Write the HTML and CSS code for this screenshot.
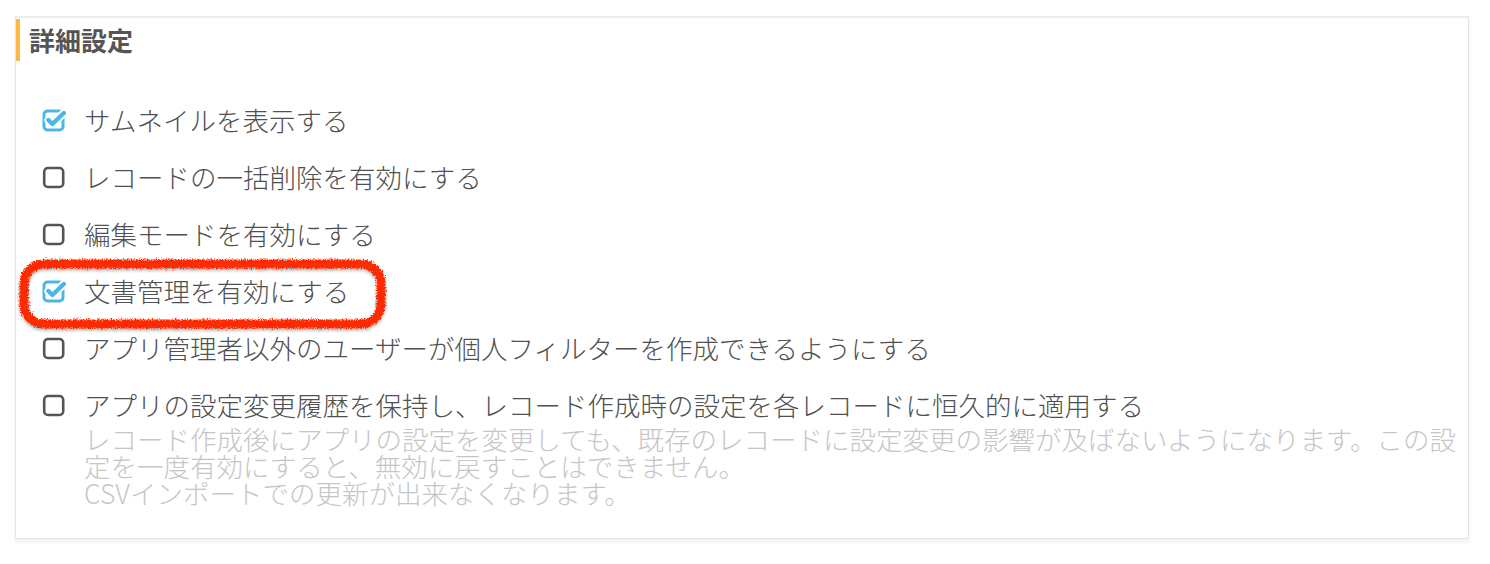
FILE: index.html
```html
<!DOCTYPE html>
<html lang="ja">
<head>
<meta charset="utf-8">
<title>詳細設定</title>
<link rel="stylesheet" href="styles.css">
</head>
<body>
<svg class="defs" width="0" height="0" aria-hidden="true">
  <defs>
    <filter id="rough" x="-10%" y="-30%" width="120%" height="160%">
      <feTurbulence type="fractalNoise" baseFrequency="0.8" numOctaves="2" seed="5" result="noise"/>
      <feDisplacementMap in="SourceGraphic" in2="noise" scale="6" xChannelSelector="R" yChannelSelector="G" result="disp"/>
      <feGaussianBlur in="disp" stdDeviation="0.35" result="soft"/>
      <feDropShadow in="soft" dx="0" dy="2" stdDeviation="1.6" flood-color="#000" flood-opacity="0.3"/>
    </filter>
    <symbol id="cb-on" viewBox="0 0 24 24">
      <rect x="2" y="3" width="19" height="19" rx="3.5" fill="none" stroke="#4bb7e8" stroke-width="3"/>
      <path d="M6.4 12 L10.4 16 L21.8 5" fill="none" stroke="#fff" stroke-width="8" stroke-linecap="round" stroke-linejoin="round"/>
      <path d="M6.4 12 L10.4 16 L21.8 5" fill="none" stroke="#4bb7e8" stroke-width="4.4" stroke-linecap="round" stroke-linejoin="round"/>
    </symbol>
    <symbol id="cb-off" viewBox="0 0 24 24">
      <rect x="2.2" y="3" width="19" height="19" rx="3.8" fill="none" stroke="#555" stroke-width="2.6"/>
    </symbol>
  </defs>
</svg>

<section class="card">
  <h2 class="title">詳細設定</h2>
  <ul class="options">
    <li class="option">
      <svg class="cb"><use href="#cb-on"/></svg>
      <span class="label">サムネイルを表示する</span>
    </li>
    <li class="option">
      <svg class="cb"><use href="#cb-off"/></svg>
      <span class="label">レコードの一括削除を有効にする</span>
    </li>
    <li class="option">
      <svg class="cb"><use href="#cb-off"/></svg>
      <span class="label">編集モードを有効にする</span>
    </li>
    <li class="option highlighted">
      <svg class="cb"><use href="#cb-on"/></svg>
      <span class="label">文書管理を有効にする</span>
      <svg class="mark" width="375" height="80" viewBox="0 0 375 80" aria-hidden="true">
        <rect x="9" y="9" width="357" height="60" rx="20" fill="none" stroke="#ff2a05" stroke-width="9" filter="url(#rough)"/>
      </svg>
    </li>
    <li class="option">
      <svg class="cb"><use href="#cb-off"/></svg>
      <span class="label">アプリ管理者以外のユーザーが個人フィルターを作成できるようにする</span>
    </li>
    <li class="option last">
      <svg class="cb"><use href="#cb-off"/></svg>
      <div class="body">
        <span class="label">アプリの設定変更履歴を保持し、レコード作成時の設定を各レコードに恒久的に適用する</span>
        <p class="desc">レコード作成後にアプリの設定を変更しても、既存のレコードに設定変更の影響が及ばないようになります。この設定を一度有効にすると、無効に戻すことはできません。<br>CSVインポートでの更新が出来なくなります。</p>
      </div>
    </li>
  </ul>
</section>
</body>
</html>
```

FILE: styles.css
```css
* { box-sizing: border-box; }

html, body {
  margin: 0;
  padding: 0;
  background: #ffffff;
}

body {
  width: 1490px;
  height: 564px;
  overflow: hidden;
  font-family: "Noto Sans CJK JP", "Noto Sans", sans-serif;
  color: #555555;
}

.defs {
  position: absolute;
  width: 0;
  height: 0;
  overflow: hidden;
}

.card {
  margin: 16px 0 0 15px;
  width: 1454px;
  height: 523px;
  border: 1px solid #e6e6e6;
  border-top: 2px solid #ececec;
  background: #fff;
  box-shadow: 0 3px 4px rgba(0, 0, 0, 0.06);
}

.title {
  margin: 1px 0 0 0;
  height: 42px;
  border-left: 4px solid #f8b945;
  padding-left: 9px;
  font-size: 26px;
  font-weight: bold;
  line-height: 42px;
  color: #555;
}

.options {
  list-style: none;
  margin: 44px 0 0 0;
  padding: 0 0 0 26px;
}

.option {
  position: relative;
  display: flex;
  align-items: center;
  gap: 18px;
  margin-bottom: 27px;
}

.option.last {
  align-items: flex-start;
  margin-bottom: 0;
}

.cb {
  flex: 0 0 24px;
  width: 24px;
  height: 24px;
}

.option.last .cb {
  margin-top: 3px;
}

.label {
  display: block;
  font-size: 26.5px;
  font-weight: 300;
  line-height: 30px;
  color: #505050;
  white-space: nowrap;
}

.body {
  display: flex;
  flex-direction: column;
}

.desc {
  margin: 5px 0 0 0;
  width: 1384px;
  font-size: 26.5px;
  font-weight: 300;
  line-height: 27px;
  color: #c6c6c6;
}

.mark {
  position: absolute;
  left: -27px;
  top: -21px;
  pointer-events: none;
}
```
